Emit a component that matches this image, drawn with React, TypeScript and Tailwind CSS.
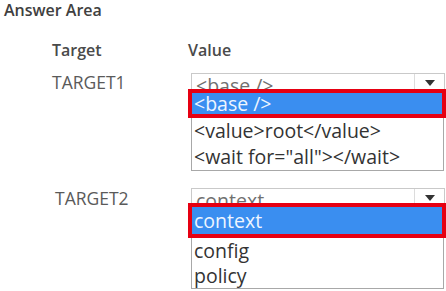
import React from "react";

// --- Data ---
type Field = { label: string; shown: string; options: string[] };

const FIELDS: Field[] = [
  { label: "TARGET1", shown: "<base />", options: ["<base />", "<value>root</value>", "<wait for=\"all\"></wait>"] },
  { label: "TARGET2", shown: "context", options: ["context", "config", "policy"] },
];

const font = { fontFamily: '"Open Sans", "Noto Sans", sans-serif' };

function Arrow() {
  return (
    <svg width="10" height="6" viewBox="0 0 10 6">
      <path d="M0 0 H10 L5 6 Z" fill="#333" />
    </svg>
  );
}

function Dropdown({ f, tall }: { f: Field; tall: boolean }) {
  return (
    <div className="flex flex-col">
      {/* closed select, half covered by the open list */}
      <div className={`ml-[3px] mr-[1px] overflow-hidden border-t border-l border-r border-[#c9c9c9] bg-white flex ${tall ? "h-[15px]" : "h-[16px]"}`}>
        <div className="flex-1 pl-[4px] pt-[1px] text-[19.5px] leading-[22px] text-[#707070] whitespace-nowrap">{f.shown}</div>
        <div className="w-[30px] border-l border-[#dcdcdc] flex items-start justify-center pt-[6px]">
          <Arrow />
        </div>
      </div>
      {/* highlighted option */}
      <div className={`border-[4px] border-[#e60012] ${tall ? "h-[35px]" : "h-[29px]"}`}>
        <div className="h-full bg-[#3a8ef0] pl-[2px] text-[19.5px] text-[#eef5ff] flex items-center whitespace-nowrap">{f.options[0]}</div>
      </div>
      <div className="ml-[3px] mr-[2px] border-l border-r border-b border-[#a8a8a8] bg-white text-[19.5px] text-[#333]">
        {f.options.slice(1).map((o) => (
          <div key={o} className={`pl-[2px] whitespace-nowrap ${tall ? "h-[25px] leading-[25px]" : "h-[26px] leading-[26px]"}`}>{o}</div>
        ))}
      </div>
    </div>
  );
}

export default function App() {
  return (
    <div className="w-[446px] h-[291px] overflow-hidden bg-white" style={font}>
      <div className="pl-[4px] text-[16px] leading-[20px] font-semibold text-[#404040]">Answer Area</div>

      <div className="grid grid-cols-[136px_1fr] pl-[52px] mt-[20px]">
        <div className="text-[16px] leading-[20px] font-semibold text-[#4a4a4a]">Target</div>
        <div className="text-[16px] leading-[20px] font-semibold text-[#4a4a4a]">Value</div>

        <div className="pt-[12px] text-[17.5px] leading-[20px] text-[#5a5a5a]">{FIELDS[0].label}</div>
        <div className="mt-[13px]">
          <Dropdown f={FIELDS[0]} tall={false} />
        </div>

        <div className="pt-[17px] pl-[3px] text-[17.5px] leading-[20px] text-[#5a5a5a]">{FIELDS[1].label}</div>
        <div className="mt-[17px]">
          <Dropdown f={FIELDS[1]} tall={true} />
        </div>
      </div>
    </div>
  );
}
